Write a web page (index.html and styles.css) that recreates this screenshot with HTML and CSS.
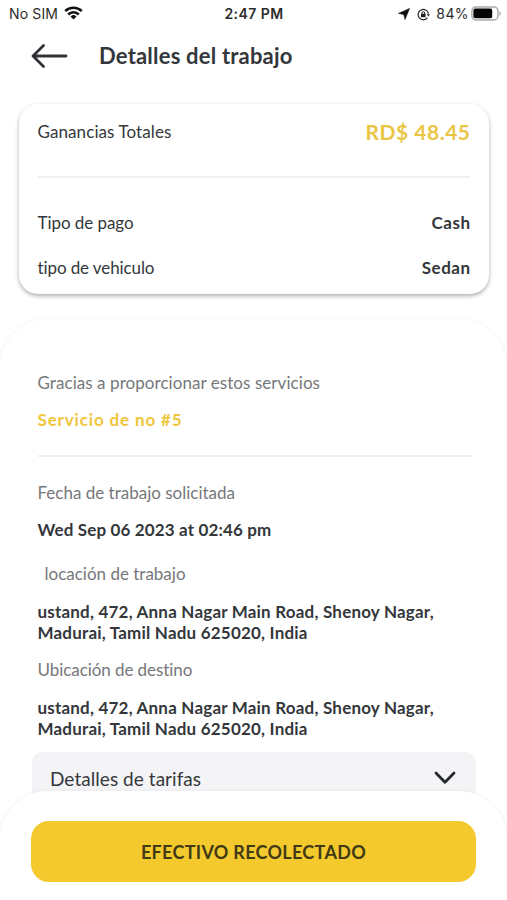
FILE: index.html
```
<!DOCTYPE html>
<html lang="es">
<head>
<meta charset="utf-8">
<title>Detalles del trabajo</title>
<link rel="stylesheet" href="styles.css">
</head>
<body>
<div class="screen">
  <div class="status">
    <div class="status-left">
      <span class="carrier">No SIM</span>
      <svg class="wifi" width="19" height="14" viewBox="0 0 19 14" fill="none" stroke="#111" stroke-width="2.5"><path d="M1.2 5.2a11.8 11.8 0 0 1 16.6 0"/><path d="M4.2 8.5a7.5 7.5 0 0 1 10.6 0"/><path d="M9.5 13.4 6.5 10.5a4.3 4.3 0 0 1 6 0z" fill="#111" stroke="none"/></svg>
    </div>
    <span class="clock">2:47 PM</span>
    <div class="status-right">
      <svg class="locate" width="12" height="12" viewBox="0 0 12 12"><path d="M11.5.5 7 11.5 5.8 6.4.5 5.4z" fill="#0c0c0c" stroke="#0c0c0c" stroke-width=".6" stroke-linejoin="round"/></svg>
      <svg class="lock" width="13" height="13" viewBox="0 0 13 13" fill="none" stroke="#222"><path d="M10.5 9.7a5.2 5.2 0 1 1 .9-4" stroke-width="1.2"/><path d="m9.7 6.2 3.1 0-1.2 2.3z" fill="#222" stroke="none"/><path d="M5 6V5a1.3 1.3 0 0 1 2.6 0v1"/><path d="M4 5.8h4.6v3.4H4z" fill="#222" stroke="none"/></svg>
      <span class="percent">84%</span>
      <svg class="battery" width="31" height="15" viewBox="0 0 31 15"><rect x=".9" y=".9" width="26" height="13" rx="4" fill="#fff" stroke="#aaa" stroke-width="1.5"/><rect x="2.4" y="2.6" width="18.8" height="9.6" rx="1.8" fill="#050505"/><path d="M28.5 5.3q1.5.5 1.5 2.2t-1.5 2.2z" fill="#aaa"/></svg>
    </div>
  </div>

  <header class="header">
    <svg width="38" height="26" viewBox="0 0 38 26" fill="none" stroke="#303236" stroke-width="2.8" stroke-linecap="round" stroke-linejoin="round"><path d="M35 13H2M12.5 2.5 2 13l10.500 10.500"/></svg>
    <h1 class="title">Detalles del trabajo</h1>
  </header>

  <section class="card">
    <div class="row row-total"><span class="label earnings">Ganancias Totales</span><strong class="amount">RD$ 48.45</strong></div>
    <div class="row"><span class="label">Tipo de pago</span><strong class="value">Cash</strong></div>
    <div class="row"><span class="label vehicle">tipo de vehiculo</span><strong class="value">Sedan</strong></div>
  </section>

  <main class="sheet">
    <p class="caption thanks">Gracias a proporcionar estos servicios</p>
    <p class="service">Servicio de no #5</p>
    <hr class="rule">
    <p class="caption requested">Fecha de trabajo solicitada</p>
    <p class="date">Wed Sep 06 2023 at 02:46 pm</p>
    <p class="caption pickup">locación de trabajo</p>
    <p class="address">ustand, 472, Anna Nagar Main Road, Shenoy Nagar,<br>Madurai, Tamil Nadu 625020, India</p>
    <p class="caption dropoff">Ubicación de destino</p>
    <p class="address">ustand, 472, Anna Nagar Main Road, Shenoy Nagar,<br>Madurai, Tamil Nadu 625020, India</p>
    <div class="fares">
      <span>Detalles de tarifas</span>
      <svg width="22" height="14" viewBox="0 0 22 14" fill="none" stroke="#25292e" stroke-width="2.8" stroke-linecap="round" stroke-linejoin="round"><path d="m2 2 9 9.300L20 2"/></svg>
    </div>
  </main>

  <footer class="footer">
    <button class="collect">EFECTIVO RECOLECTADO</button>
  </footer>
</div>
</body>
</html>
```
FILE: styles.css
```
* { box-sizing: border-box; }

body {
  margin: 0;
  background: #fff;
  color: #34373b;
  font-family: Lato, "Liberation Sans", sans-serif;
  font-size: 17px;
}

p, h1 { margin: 0; white-space: nowrap; }

.screen {
  width: 507px;
  height: 900px;
  display: flex;
  flex-direction: column;
  overflow: hidden;
}

.status {
  flex: none;
  height: 28px;
  padding: 0 6px 0 9px;
  display: grid;
  grid-template-columns: 1fr auto 1fr;
  align-items: center;
  font-family: Inter, sans-serif;
  font-size: 14px;
  line-height: 28px;
  color: #2b2b2b;
}

.status-left, .status-right { display: flex; align-items: center; }
.status-right { justify-content: flex-end; margin-right: -1px; }
.carrier { letter-spacing: 0.15px; }
.wifi { margin: 0 0 2px 6px; }
.clock { margin-left: -2px; font-weight: 600; letter-spacing: 0.45px; }
.locate { margin-right: 7px; }
.lock { margin-right: 6px; }
.percent { margin-right: 2px; letter-spacing: 0.4px; }
.battery { margin-bottom: 2px; }

.header {
  flex: none;
  height: 56px;
  padding-left: 31px;
  display: flex;
  align-items: center;
  gap: 30px;
}

.title { font-size: 22px; line-height: 28px; letter-spacing: 0.2px; }

.card {
  flex: none;
  height: 190px;
  margin: 20px 18px 0 19px;
  padding: 5px 19px 0 18.5px;
  border-radius: 19px;
  background: #fff;
  box-shadow: 0 2px 4px rgba(0, 0, 0, 0.32);
}

.row {
  height: 45px;
  display: flex;
  align-items: center;
  justify-content: space-between;
}

.row-total {
  height: 69px;
  padding-bottom: 23px;
  margin-bottom: 22px;
  border-bottom: 2px solid #f0f0f0;
}

.label { letter-spacing: -0.06px; }
.earnings { letter-spacing: 0.09px; }
.vehicle { letter-spacing: -0.1px; }
.value { letter-spacing: 0.5px; margin-right: -0.5px; }
.amount { font-size: 21px; letter-spacing: 0.5px; margin-right: -0.5px; color: #eac545; }

.sheet {
  flex: none;
  height: 520px;
  margin-top: 25px;
  padding: 53px 31px 0 37.5px;
  border-radius: 48px 48px 0 0;
  background: #fff;
  box-shadow: 0 1px 4px rgba(0, 0, 0, 0.09);
}

.caption { line-height: 22px; color: #76777a; }
.thanks { letter-spacing: 0.06px; }
.service { margin-top: 15px; line-height: 22px; font-weight: 700; letter-spacing: 0.85px; color: #efc63c; }
.rule { height: 2px; margin: 24px 4px 0 0; border: 0; background: #f0f0f0; }
.requested { margin-top: 25px; letter-spacing: 0; }
.date { margin-top: 15px; line-height: 22px; font-weight: 700; letter-spacing: 0.145px; }
.pickup { margin-top: 22px; padding-left: 7px; }
.address { margin-top: 17px; line-height: 20.5px; font-weight: 700; letter-spacing: 0.2px; }
.dropoff { margin-top: 16px; letter-spacing: -0.07px; }

.fares {
  height: 52px;
  margin: 13px 0 0 -5.5px;
  padding: 0 20px 0 18px;
  display: flex;
  align-items: center;
  justify-content: space-between;
  border-radius: 10px;
  background: #f4f4f7;
  font-size: 19px;
  letter-spacing: 0.05px;
}

.footer {
  position: relative;
  flex: none;
  height: 109px;
  margin-top: -48px;
  padding: 30px 31px 0;
  border-radius: 48px 48px 0 0;
  background: #fff;
  box-shadow: 0 1px 4px rgba(0, 0, 0, 0.1);
}

.collect {
  width: 100%;
  height: 61px;
  padding: 0;
  border: 0;
  border-radius: 18px;
  background: #f4c92d;
  color: #423a14;
  font-family: inherit;
  font-size: 18px;
  font-weight: 700;
  letter-spacing: 0.3px;
}
```
